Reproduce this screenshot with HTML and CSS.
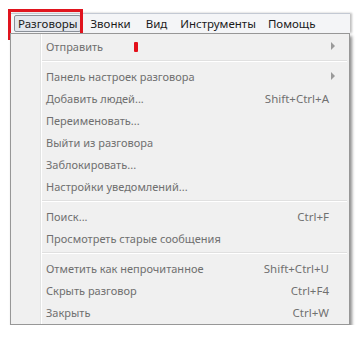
FILE: index.html
```html
<!DOCTYPE html>
<html lang="ru">
<head>
    <meta charset="UTF-8">
    <title>Разговоры</title>
    <link rel="stylesheet" href="styles.css">
</head>
<body>
    <div class="window">
        <div class="menubar">
            <span class="bar-item active">Разговоры</span>
            <span class="bar-item calls">Звонки</span>
            <span class="bar-item view">Вид</span>
            <span class="bar-item tools">Инструменты</span>
            <span class="bar-item">Помощь</span>
        </div>
        <div class="menu">
            <span class="mark"></span>
            <div class="row"><span>Отправить</span><span class="arrow"></span></div>
            <div class="sep"></div>
            <div class="row"><span>Панель настроек разговора</span><span class="arrow"></span></div>
            <div class="row"><span>Добавить людей...</span><span class="key">Shift+Ctrl+A</span></div>
            <div class="row"><span>Переименовать...</span></div>
            <div class="row"><span>Выйти из разговора</span></div>
            <div class="row"><span>Заблокировать...</span></div>
            <div class="row"><span>Настройки уведомлений...</span></div>
            <div class="sep"></div>
            <div class="row"><span>Поиск...</span><span class="key">Ctrl+F</span></div>
            <div class="row"><span>Просмотреть старые сообщения</span></div>
            <div class="sep"></div>
            <div class="row"><span>Отметить как непрочитанное</span><span class="key">Shift+Ctrl+U</span></div>
            <div class="row"><span>Скрыть разговор</span><span class="key">Ctrl+F4</span></div>
            <div class="row"><span>Закрыть</span><span class="key">Ctrl+W</span></div>
        </div>
    </div>
</body>
</html>
```

FILE: styles.css
```css
body {
    margin: 0;
    background: #fff;
    font-family: 'Noto Sans', 'Open Sans', sans-serif;
    font-size: 11px;
}
.window {
    margin: 13px 0 0 10px;
    width: 340px;
}
.menubar {
    display: flex;
    align-items: center;
    height: 19px;
    border-top: 1px solid #c3c9d3;
    background: #f4f5f7;
    padding-left: 4px;
    box-shadow: 2px 0 2px rgba(0,0,0,0.25);
}
.bar-item {
    position: relative;
    padding: 0 5px;
    line-height: 15px;
    font-size: 11.5px;
    color: #1b1b1b;
    border: 1px solid transparent;
}
.calls {
    margin-left: 3px;
}
.view {
    margin-left: 3px;
}
.tools {
    margin-left: 1px;
}
.active {
    background: #e3e6ec;
    border-color: #8a9098;
    border-radius: 2px;
    padding: 0 3px;
}
.active::after {
    content: '';
    position: absolute;
    left: -7px;
    top: -7px;
    right: -3px;
    bottom: -9px;
    border: 3px solid #e0141e;
}
.menu {
    position: relative;
    border: 1px solid #979797;
    background: linear-gradient(to right, #f0f0f0 29px, #e2e3e3 29px, #e2e3e3 30px, #fff 30px, #fff 31px, #f0f0f0 31px);
    padding: 1px 0;
    box-shadow: 2px 3px 3px rgba(0,0,0,0.45);
}
.row {
    display: flex;
    align-items: center;
    justify-content: space-between;
    height: 22px;
    padding: 0 20px 0 35px;
    color: #6f6f6f;
}
.key {
    font-size: 11.5px;
    color: #707070;
}
.arrow {
    width: 0;
    height: 0;
    border-top: 4px solid transparent;
    border-bottom: 4px solid transparent;
    border-left: 4px solid #9a9a9a;
    margin-right: -6px;
}
.sep {
    height: 1px;
    margin: 3px 2px 3px 31px;
    border-top: 1px solid #e0e0e0;
    background: #fff;
}
.mark {
    position: absolute;
    left: 123px;
    top: 8px;
    width: 4px;
    height: 10px;
    background: #e3101a;
    border-radius: 1px;
}
```
